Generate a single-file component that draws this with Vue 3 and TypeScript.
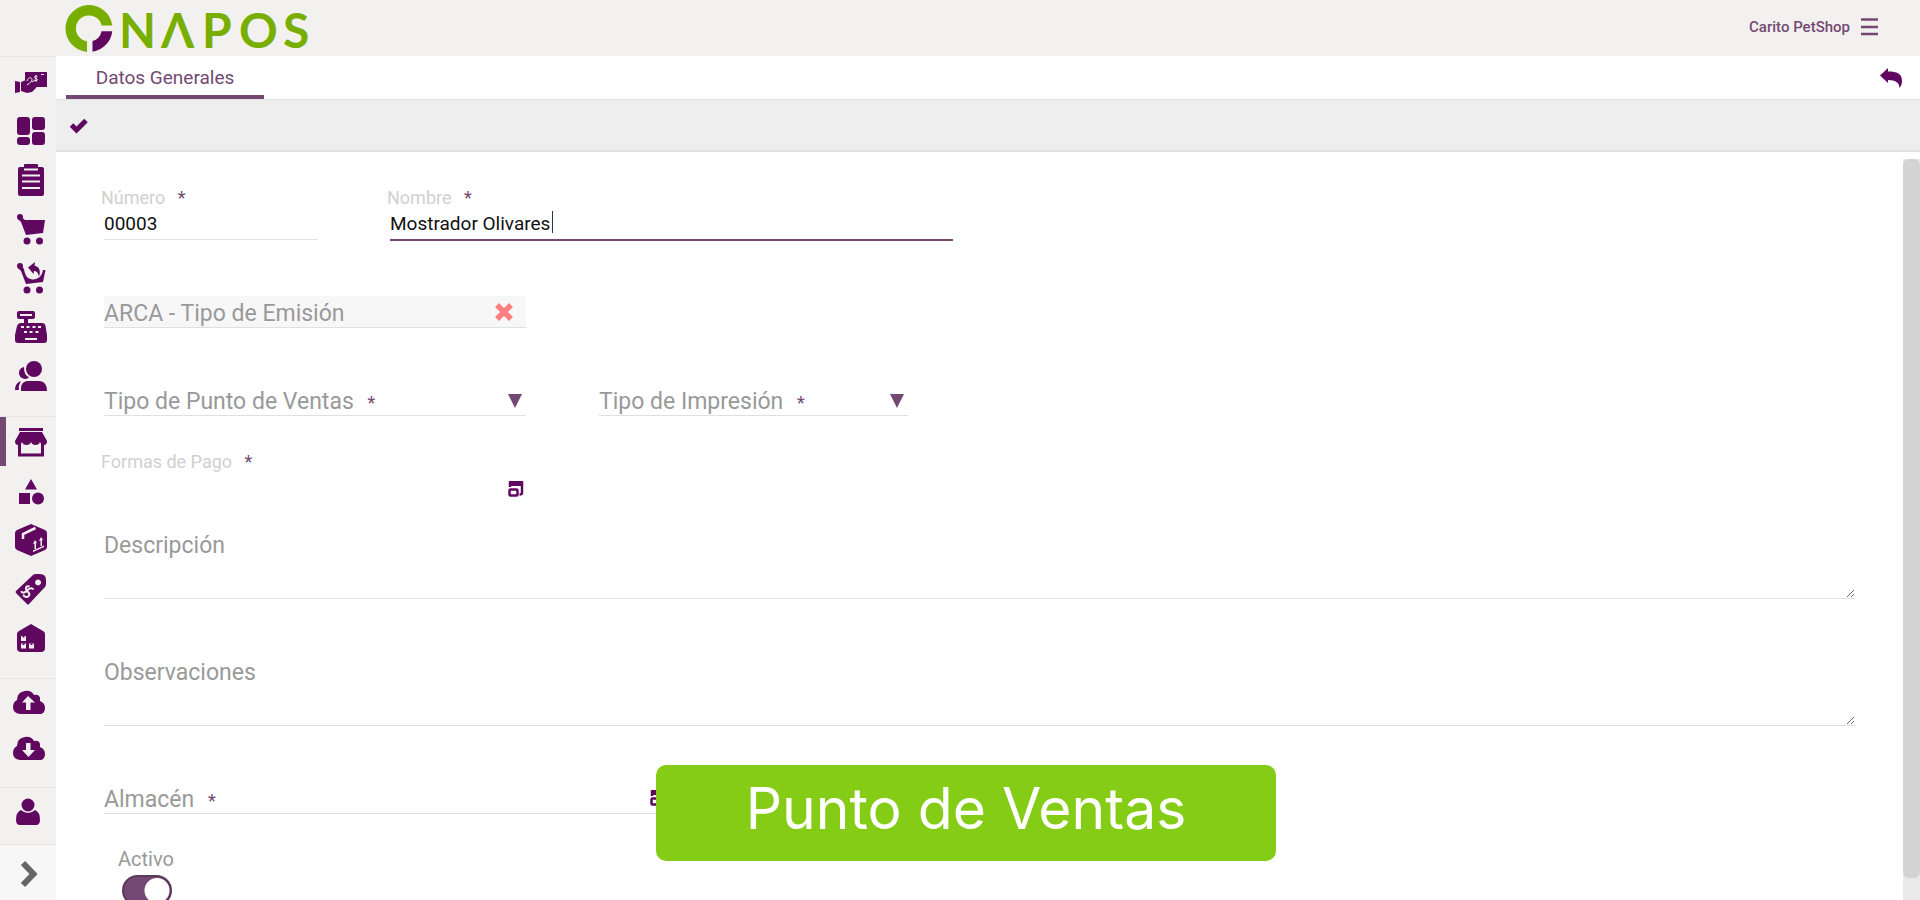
<script setup lang="ts">
import { ref } from 'vue'

interface NavItem {
  id: string
  label: string
  svg: string
}

const groups: { name: string; items: NavItem[] }[] = [
  {
    name: 'operations',
    items: [
      {
        id: 'cash',
        label: 'Cobros',
        svg: '<rect x="10" y="6" width="22" height="15" rx=".5"/><path d="M0 15l5 1v10l-5 1z"/><path d="M6 16l5-2h8l4 3-2 5-4 4-5 1-6-2z"/><path d="M12 15c1-4 5-4 5-1.500 0 2-2 3.500-5 5.500M17 16l3-2" fill="none" stroke="#f3f1f0" stroke-width="1"/><path d="M22.500 10.500c-1.500-1-3-.5-3 .8s3 1 3 2.300-2 1.300-3.200.4M21 9v7M26 8.500h3" fill="none" stroke="#f3f1f0" stroke-width="1"/>',
      },
      {
        id: 'dashboard',
        label: 'Tablero',
        svg: '<rect x="2" y="2" width="13" height="18" rx="3"/><rect x="17" y="2" width="13" height="13" rx="3"/><rect x="2" y="22" width="13" height="8" rx="3"/><rect x="17" y="17" width="13" height="13" rx="3"/>',
      },
      {
        id: 'orders',
        label: 'Pedidos',
        svg: '<path d="M5 3h4V1q0-1 1-1h12q1 0 1 1v2h4q2 0 2 2v25q0 2-2 2H5q-2 0-2-2V5q0-2 2-2z"/><path d="M9 5.500h14M7 11.500h18M7 17.500h18M7 24h18" fill="none" stroke="#f3f1f0" stroke-width="1.800"/>',
      },
      {
        id: 'sales',
        label: 'Ventas',
        svg: '<circle cx="5" cy="4" r="3"/><path d="M5 3l5 4h20l-2 13-17 2-5-13-3-3z"/><circle cx="12" cy="28" r="3.500"/><circle cx="24.500" cy="28" r="3.500"/>',
      },
      {
        id: 'returns',
        label: 'Devoluciones',
        svg: '<circle cx="5" cy="4" r="3"/><path d="M3 6l3-3 3 4c1 7 4 10.500 9 10.500S27 14 28 8h2.500L28 20l-17 2L6 9z"/><path d="M13 5.500L20 0l-.500 3.500C24.500 5 26 9 24 14.500 23 10.500 21.500 9 19 9l-.500 3z"/><circle cx="12" cy="28" r="3.500"/><circle cx="24.500" cy="28" r="3.500"/>',
      },
      {
        id: 'register',
        label: 'Caja',
        svg: '<path fill-rule="evenodd" d="M4 0h14q2 0 2 2v4q0 2-2 2h-5v4h14q3 0 3.500 3L32 24v5q0 3-3 3H3q-3 0-3-3v-5l2-9q1-3 4-3h3V8H4Q2 8 2 6V2q0-2 2-2zm1 3v2h12V3zM6 15h3v2H6zm5.500 0h3v2h-3zm6 0h3v2h-3zm5.500 0h3v2h-3zM9 20h3v2H9zm5.500 0h3v2h-3zm6 0h3v2h-3zM10 27h12v2H10z"/>',
      },
      {
        id: 'customers',
        label: 'Clientes',
        svg: '<circle cx="19" cy="9" r="8"/><path d="M9 7q0 9 5 10-1 2-4 2-6-1-6-6t5-6zM6 31q-1-9 6-10h13q7 1 7 10zM6 21q-3 5-2 9H0q0-7 6-9z"/>',
      },
    ],
  },
  {
    name: 'catalog',
    items: [
      {
        id: 'pos',
        label: 'Punto de Ventas',
        svg: '<path d="M4 2h24v3H4zM5 6h22l5 9q0 4-3 4t-4-3q-1 3-4.500 3T16 16q-1 3-4.500 3T7 16q-1 3-4 3t-3-4z"/><path d="M4.500 18v11h23V18" fill="none" stroke="currentColor" stroke-width="3"/>',
      },
      {
        id: 'categories',
        label: 'Categorías',
        svg: '<path d="M16 4l6 10.500H10zM4 18h11v11H4z"/><circle cx="23" cy="23.500" r="6"/>',
      },
      {
        id: 'products',
        label: 'Productos',
        svg: '<path d="M16 0l14 6q2 1 2 3v14q0 2-2 3l-14 6-14-6q-2-1-2-3V9q0-2 2-3z"/><path d="M20.500 4L8 10v5" fill="none" stroke="#f3f1f0" stroke-width="2.500"/><path d="M18 20l2-4 2 3zm1.500-1H21v6h-1.500zM24 17l2-4 2 3zm1.500-1H27v6h-1.500zM18 26.500l11-5v1.500l-11 5z" fill="#f3f1f0"/>',
      },
      {
        id: 'prices',
        label: 'Precios',
        svg: '<path fill-rule="evenodd" d="M18 2q1-1 3-1h4q6 0 6 6v4q0 2-1 3L14 31q-1 1-2 0L1 20q-1-1 0-2zM23 6.500a3 3 0 1 0 .1 0z"/><path d="M14.500 13.500c-3-1-4.500 1-3 3.500s4 3 2.500 5.500-4 1.500-6-.5M18.500 16.500c-2-2.500-4.500-1-7 1.500s-5 2-5 0" fill="none" stroke="#f3f1f0" stroke-width="2"/>',
      },
      {
        id: 'stores',
        label: 'Almacenes',
        svg: '<path d="M16 2l12 7q2 1 2 3v14q0 4-4 4H6q-4 0-4-4V12q0-2 2-3z"/><path d="M6 14h5v5H6zM6 21.500h5v5H6zM14 21.500h5v5h-5z" fill="#f3f1f0"/><path d="M7.500 14h2v1.500h-2zM7.500 21.500h2V23h-2zM15.500 21.500h2V23h-2z"/>',
      },
    ],
  },
  {
    name: 'cloud',
    items: [
      {
        id: 'upload',
        label: 'Subir datos',
        svg: '<path fill-rule="evenodd" d="M7 28q-7-1-7-7 0-5 4-7 0-8 8-9 6-1 9 4 5-1 6 3v3q5 2 5 7 0 5-4 6zM15 10l-6 6.500h4V24h4.500v-7.500H22z"/>',
      },
      {
        id: 'download',
        label: 'Bajar datos',
        svg: '<path fill-rule="evenodd" d="M7 28q-7-1-7-7 0-5 4-7 0-8 8-9 6-1 9 4 5-1 6 3v3q5 2 5 7 0 5-4 6zM13 11v7H9l6.500 7 6.500-7h-4.500v-7z"/>',
      },
    ],
  },
  {
    name: 'profile',
    items: [
      {
        id: 'user',
        label: 'Usuario',
        svg: '<circle cx="16" cy="9" r="6.500"/><path d="M9 14q3 3 7 3t7-3q5 2 5 10 0 5-4 5H8q-4 0-4-5 0-8 5-10z"/>',
      },
    ],
  },
]

const active = ref('pos')
const numero = ref('00003')
const nombre = ref('Mostrador Olivares')
const emision = ref('')
const tipoPunto = ref('')
const tipoImpresion = ref('')
const formas = ref('')
const descripcion = ref('')
const observaciones = ref('')
const almacen = ref('')
const activo = ref(true)
</script>

<template>
  <div class="app">
    <header class="topbar">
      <a href="#" class="brand" aria-label="ONAPOS">
        <svg width="250" height="56" viewBox="0 0 250 56">
          <path d="M22 51.900A23.500 23.500 0 1 1 47.300 25.500H36.600A13 13 0 1 0 22 41.300z" fill="#78ae00" />
          <path d="M47.300 31.200A23.500 23.500 0 0 1 27.500 51.700V41A13 13 0 0 0 36.600 31.200z" fill="#600860" />
          <g class="wordmark" fill="#78ae00">
            <text x="54" y="48">N</text>
            <text x="96" y="48">Λ</text>
            <text x="137" y="48">P</text>
            <text x="174" y="48">O</text>
            <text x="218" y="48">S</text>
          </g>
        </svg>
      </a>
      <button class="account" type="button">
        <span>Carito PetShop</span>
        <svg width="18" height="18" viewBox="0 0 18 18"><path d="M0 1.500h17M0 9h17M0 16h17" stroke="currentColor" stroke-width="2.500" /></svg>
      </button>
    </header>

    <div class="body">
      <nav class="side" aria-label="Principal">
        <div v-for="g in groups" :key="g.name" class="group" :class="g.name">
          <button
            v-for="item in g.items"
            :key="item.id"
            type="button"
            class="nav"
            :class="{ active: active === item.id }"
            :aria-label="item.label"
            @click="active = item.id"
          >
            <svg width="32" height="32" viewBox="0 0 32 32" fill="currentColor" v-html="item.svg" />
          </button>
        </div>
        <button type="button" class="expand" aria-label="Expandir menú">
          <svg width="18" height="28" viewBox="0 0 18 28"><path d="M3 3l10.500 11L3 25" fill="none" stroke="#666" stroke-width="6" /></svg>
        </button>
      </nav>

      <main class="main">
        <div class="tabs">
          <button type="button" class="tab">Datos Generales</button>
          <button type="button" class="back" aria-label="Volver">
            <svg width="22" height="20" viewBox="0 0 22 20"><path d="M0 7.500L8 0v3.500c9 0 14 2 14 9.500 0 3-1 5-2.500 7 0-5-3.500-8-11.500-8V15z" fill="currentColor" /></svg>
          </button>
        </div>
        <div class="tools">
          <button type="button" class="confirm" aria-label="Guardar">
            <svg width="20" height="16" viewBox="0 0 20 16"><path d="M2.500 7l5 5L17 2.500" fill="none" stroke="currentColor" stroke-width="5" /></svg>
          </button>
        </div>

        <div class="view">
          <form class="form" @submit.prevent>
            <div class="row first">
              <div class="field numero">
                <label for="numero">Número <b>*</b></label>
                <input id="numero" v-model="numero" type="text" />
              </div>
              <div class="field nombre">
                <label for="nombre">Nombre <b>*</b></label>
                <input id="nombre" v-model="nombre" class="editing" type="text" />
              </div>
            </div>

            <div class="row">
              <div class="slot medium locked">
                <label for="emision">ARCA - Tipo de Emisión</label>
                <input id="emision" v-model="emision" type="text" readonly />
                <button type="button" class="clear" aria-label="Quitar">
                  <svg width="18" height="18" viewBox="0 0 18 18"><path d="M2 2l14 14M16 2L2 16" stroke="#ff8080" stroke-width="5.500" /></svg>
                </button>
              </div>
            </div>

            <div class="row pair">
              <div class="slot medium">
                <label for="tipo-punto">Tipo de Punto de Ventas <b>*</b></label>
                <select id="tipo-punto" v-model="tipoPunto"></select>
                <svg class="arrow" width="14" height="14" viewBox="0 0 14 14"><path d="M0 0h14L7 14z" fill="currentColor" /></svg>
              </div>
              <div class="slot small">
                <label for="tipo-impresion">Tipo de Impresión <b>*</b></label>
                <select id="tipo-impresion" v-model="tipoImpresion"></select>
                <svg class="arrow" width="14" height="14" viewBox="0 0 14 14"><path d="M0 0h14L7 14z" fill="currentColor" /></svg>
              </div>
            </div>

            <div class="row formas">
              <div class="field">
                <label for="formas">Formas de Pago <b>*</b></label>
                <div class="picker">
                  <input id="formas" v-model="formas" type="text" />
                  <button type="button" aria-label="Elegir formas de pago">
                    <svg width="16" height="16" viewBox="0 0 16 16"><path d="M2 6V1.500h12V12q0 1.500-2.500 1.500" fill="none" stroke="currentColor" stroke-width="2.500" /><path d="M1 1q0-1 1-1h12q1 0 1 1v4H1z" fill="currentColor" /><rect x="1.500" y="8.500" width="8" height="6" rx="1" fill="none" stroke="currentColor" stroke-width="2.500" /></svg>
                  </button>
                </div>
              </div>
            </div>

            <div class="row text-row">
              <div class="slot">
                <label for="descripcion">Descripción</label>
                <textarea id="descripcion" v-model="descripcion"></textarea>
              </div>
            </div>

            <div class="row">
              <div class="slot">
                <label for="observaciones">Observaciones</label>
                <textarea id="observaciones" v-model="observaciones"></textarea>
              </div>
            </div>

            <div class="row">
              <div class="slot large">
                <label for="almacen">Almacén <b>*</b></label>
                <input id="almacen" v-model="almacen" type="text" />
                <button type="button" class="pick" aria-label="Elegir almacén">
                  <svg width="16" height="16" viewBox="0 0 16 16"><path d="M2 6V1.500h12V12q0 1.500-2.500 1.500" fill="none" stroke="currentColor" stroke-width="2.500" /><path d="M1 1q0-1 1-1h12q1 0 1 1v4H1z" fill="currentColor" /><rect x="1.500" y="8.500" width="8" height="6" rx="1" fill="none" stroke="currentColor" stroke-width="2.500" /></svg>
                </button>
              </div>
            </div>

            <div class="switch">
              <label for="activo">Activo</label>
              <input id="activo" v-model="activo" type="checkbox" role="switch" />
            </div>
          </form>
          <div class="rail" aria-hidden="true"><div class="thumb"></div></div>
        </div>
      </main>
    </div>

    <div class="caption">Punto de Ventas</div>
  </div>
</template>

<style>
body {
  margin: 0;
  overflow: hidden;
}
</style>

<style scoped>
.app {
  display: flex;
  flex-direction: column;
  height: 100vh;
  overflow: hidden;
  background: #fff;
  color: #734973;
  font-family: Roboto, 'Liberation Sans', sans-serif;
  font-size: 18px;
}
.app * {
  box-sizing: border-box;
}
svg {
  display: block;
}
button {
  display: flex;
  align-items: center;
  padding: 0;
  border: 0;
  background: none;
  color: #600860;
  font: inherit;
  cursor: pointer;
}
input,
select,
textarea {
  width: 100%;
  margin: 0;
  padding: 0;
  border: 0;
  border-bottom: 1px solid #e0e0e0;
  border-radius: 0;
  outline: none;
  background: none;
  color: #111;
  font: inherit;
  font-size: 19px;
  appearance: none;
}
.topbar {
  display: flex;
  flex: none;
  justify-content: space-between;
  align-items: center;
  height: 56px;
  padding: 0 41px 0 65px;
  background: #f3f1f0;
}
.brand svg {
  overflow: visible;
}
.wordmark {
  font-family: Lato, 'Open Sans', sans-serif;
  font-size: 48px;
  font-weight: 700;
}
.account {
  gap: 11px;
  padding-bottom: 2px;
  color: #734973;
  font-size: 15px;
  font-weight: 500;
}
.body {
  display: flex;
  flex: 1;
  min-height: 0;
}
.side {
  display: flex;
  flex: none;
  flex-direction: column;
  width: 56px;
  background: #f3f1f0;
}
.group {
  padding-bottom: 16px;
  border-top: 1px solid #e6e6e6;
}
.nav {
  width: 100%;
  height: 49px;
  padding-left: 15px;
}
.nav.active {
  padding-left: 9px;
  border-left: 6px solid #734973;
}
.profile {
  padding-bottom: 8px;
}
.cloud .nav {
  height: 46px;
  padding-left: 13px;
}
.profile .nav {
  height: 48px;
  padding-left: 12px;
}
.expand {
  flex: 1;
  justify-content: center;
  padding: 2px 0 0 2px;
  border-top: 1px solid #e6e6e6;
  background: #f7f7f7;
}
.main {
  display: flex;
  flex: 1;
  flex-direction: column;
  min-width: 0;
}
.tabs {
  display: flex;
  flex: none;
  justify-content: space-between;
  height: 44px;
  padding: 0 18px 0 10px;
  border-bottom: 1px solid #e0e0e0;
}
.tab {
  justify-content: center;
  width: 198px;
  padding-top: 4px;
  border-bottom: 4px solid #734973;
  color: #734973;
  font-size: 19px;
}
.tools {
  display: flex;
  flex: none;
  height: 52px;
  padding: 2px 13px 0;
  border-bottom: 2px solid #e0e0e0;
  background: #eee;
}
.view {
  display: flex;
  flex: 1;
  min-height: 0;
  padding-top: 7px;
}
.form {
  flex: 1;
  min-width: 0;
  padding: 26px 48px 0;
  overflow: hidden;
}
.rail {
  width: 17px;
  background: #e9e9e9;
}
.thumb {
  height: 97%;
  border-radius: 6px;
  background: #d3d3d3;
}
.row {
  display: flex;
  margin-top: 56px;
}
.row.first {
  gap: 72px;
  height: 55px;
  margin-top: 0;
}
.row.pair {
  gap: 73px;
}
.row.formas {
  margin-top: 33px;
}
.row.text-row {
  margin-top: 25px;
}
label b {
  margin-left: 8px;
  color: #734973;
  font-size: 18px;
  font-weight: 400;
}
.field label {
  display: block;
  margin-left: -3px;
  color: #d0d0d0;
  line-height: 26px;
}
.field input {
  height: 29px;
  padding-bottom: 4px;
}
.numero {
  width: 214px;
}
.nombre {
  width: 563px;
}
.field .editing {
  height: 30px;
  border-bottom: 2px solid #734973;
  background: linear-gradient(#333, #333) 162px 0 / 1px 22px no-repeat;
}
.picker {
  display: flex;
  align-items: center;
  width: 420px;
}
.picker input {
  flex: 1;
  height: 28px;
  border-color: transparent;
}
.slot {
  display: grid;
  align-items: center;
  width: 100%;
}
.slot > * {
  grid-area: 1 / 1;
}
.slot label {
  align-self: start;
  z-index: 1;
  height: 32px;
  color: #999;
  font-size: 23px;
  line-height: 36px;
  pointer-events: none;
}
.slot input,
.slot select {
  height: 32px;
}
.slot textarea {
  display: block;
  height: 71px;
  resize: vertical;
}
.medium {
  width: 422px;
}
.small {
  width: 309px;
}
.large {
  width: 562px;
}
.locked {
  background: #f7f7f7;
}
.clear,
.arrow,
.pick {
  justify-self: end;
  z-index: 1;
}
.clear {
  margin-right: 13px;
}
.arrow {
  margin: 2px 4px 0 0;
  pointer-events: none;
}
.switch {
  display: flex;
  flex-direction: column;
  gap: 4px;
  margin: 33px 14px 0;
}
.switch label {
  color: #999;
  font-size: 20px;
  line-height: 24px;
}
.switch input {
  width: 50px;
  height: 31px;
  margin-left: 4px;
  border: 2px solid #5b3a5b;
  border-radius: 16px;
  background: radial-gradient(circle at 33px 50%, #fff 12px, #734973 13px);
}
.caption {
  position: fixed;
  bottom: 39px;
  left: calc(50% - 304px);
  z-index: 10;
  width: 620px;
  height: 96px;
  border-radius: 10px;
  background: #84cc16;
  color: #fff;
  font-family: Inter, sans-serif;
  font-size: 57px;
  line-height: 88px;
  text-align: center;
}
</style>
